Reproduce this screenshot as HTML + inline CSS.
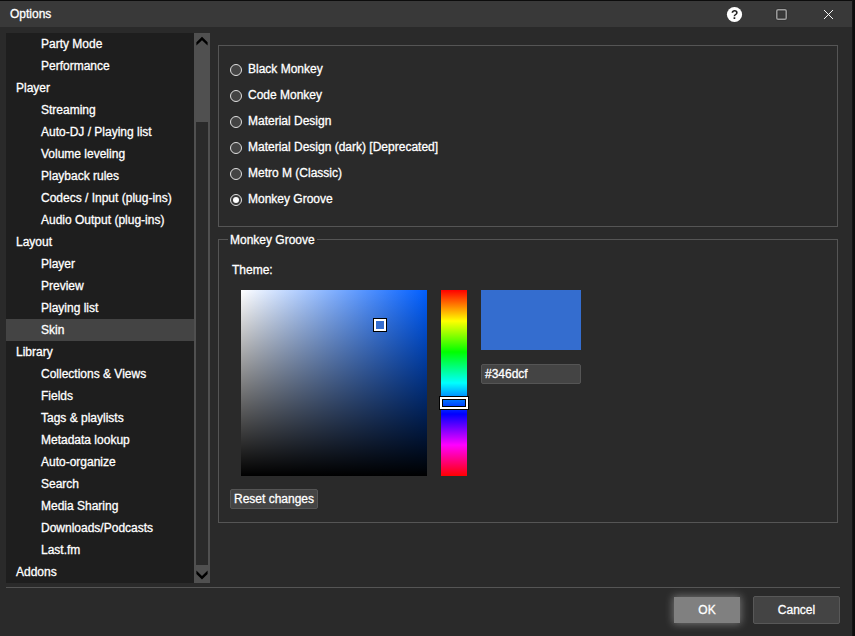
<!DOCTYPE html>
<html>
<head>
<meta charset="utf-8">
<title>Options</title>
<style>
*{box-sizing:border-box;margin:0;padding:0}
html,body{width:855px;height:636px;overflow:hidden;background:#2a2a2a}
body{position:relative;font-family:"Liberation Sans",Arial,sans-serif;font-size:12px;color:#fff;line-height:14px;-webkit-text-stroke:0.3px #fff}
.abs{position:absolute}
#topedge{left:0;top:0;width:855px;height:1px;background:#0c0c0c}
#rightedge{left:852px;top:0;width:3px;height:636px;background:linear-gradient(to right,#1a1a1a 0,#0e0e0e 34%,#0b0b0b 100%)}
#titlebar{left:0;top:1px;width:852px;height:26px;background:#393939}
#title{left:10px;top:7px;white-space:nowrap}
#tree{left:6px;top:33px;width:188px;height:550px;background:#1e1e1e;overflow:hidden}
.row{position:absolute;left:0;width:188px;height:22px;line-height:22px;white-space:nowrap}
.l0{padding-left:10px}
.l1{padding-left:35px}
.sel{background:#444}
#sb{left:194px;top:33px;width:16px;height:550px;background:#505050}
#thumb{left:2px;top:89px;width:12px;height:443px;background:#2a2a2a}
.fs{border:1px solid #555}
#fs1{left:218px;top:45px;width:620px;height:182px}
#fs2{left:218px;top:239px;width:620px;height:284px}
#legend{left:228px;top:233px;height:14px;padding:0 2px;background:#2a2a2a;white-space:nowrap}
.radio{width:12px;height:12px;border-radius:50%;border:1px solid #e0e0e0;background:#444}
.radio.on{background:#383838}
.radio.on::after{content:"";position:absolute;left:2px;top:2px;width:6px;height:6px;border-radius:50%;background:#fff}
.rl{left:248px;white-space:nowrap}
#sq{left:241px;top:290px;width:186px;height:186px;background:linear-gradient(to bottom,rgba(0,0,0,0),#000),linear-gradient(to right,#fff,#005eff)}
#mark{left:373px;top:318px;width:14px;height:14px;border:1px solid #000;background:#fff;padding:2px}
#mark i{display:block;width:8px;height:8px;background:#346dcf}
#hue{left:441px;top:290px;width:26px;height:186px;background:linear-gradient(to bottom,#f00 0%,#ff0 16.67%,#0f0 33.33%,#0ff 50%,#00f 66.67%,#f0f 83.33%,#f00 100%)}
#hs{left:440px;top:397px;width:28px;height:12px;border:2px solid #fff;box-shadow:0 0 0 1px #000,inset 0 0 0 1px #000}
#sw{left:481px;top:290px;width:100px;height:60px;background:#346dcf}
#hex{left:481px;top:364px;width:100px;height:20px;background:#444;border:1px solid #555;border-radius:2px;line-height:18px;padding-left:3px}
#reset{left:230px;top:489px;width:88px;height:20px;background:#444;border:1px solid #555;border-radius:2px;line-height:18px;text-align:center;white-space:nowrap}
#sep{left:6px;top:587px;width:834px;height:1px;background:#555}
#ok{left:674px;top:597px;width:66px;height:26px;background:#808080;line-height:26px;text-align:center;box-shadow:0 0 8px 1px rgba(255,255,255,.35)}
#cancel{left:753px;top:596px;width:87px;height:28px;background:#444;border:1px solid #585858;border-radius:2px;line-height:26px;text-align:center}
</style>
</head>
<body>
<div class="abs" id="titlebar"></div>
<div class="abs" id="topedge"></div>
<div class="abs" id="rightedge"></div>
<div class="abs" id="title">Options</div>

<svg class="abs" style="left:726px;top:6px;will-change:transform;-webkit-text-stroke:0" width="17" height="17" viewBox="0 0 17 17">
  <circle cx="8.5" cy="8.5" r="7.6" fill="#fff"/>
  <text x="8.6" y="13" text-anchor="middle" font-family="Liberation Sans, Arial, sans-serif" font-weight="bold" font-size="12" fill="#222">?</text>
</svg>
<svg class="abs" style="left:775px;top:8px" width="13" height="13" viewBox="0 0 13 13">
  <rect x="1.8" y="1.8" width="9.4" height="9.4" rx="1.3" fill="none" stroke="rgba(0,0,0,.14)" stroke-width="3"/><rect x="1.8" y="1.8" width="9.4" height="9.4" rx="1.3" fill="none" stroke="#9c9c9c" stroke-width="1.5"/>
</svg>
<svg class="abs" style="left:823px;top:9px" width="11" height="11" viewBox="0 0 11 11">
  <path d="M1 1 L10 10 M10 1 L1 10" stroke="#fff" stroke-width="0.95" fill="none"/>
</svg>

<div class="abs" id="tree">
  <div class="row l1" style="top:0">Party Mode</div>
  <div class="row l1" style="top:22px">Performance</div>
  <div class="row l0" style="top:44px">Player</div>
  <div class="row l1" style="top:66px">Streaming</div>
  <div class="row l1" style="top:88px">Auto-DJ / Playing list</div>
  <div class="row l1" style="top:110px">Volume leveling</div>
  <div class="row l1" style="top:132px">Playback rules</div>
  <div class="row l1" style="top:154px">Codecs / Input (plug-ins)</div>
  <div class="row l1" style="top:176px">Audio Output (plug-ins)</div>
  <div class="row l0" style="top:198px">Layout</div>
  <div class="row l1" style="top:220px">Player</div>
  <div class="row l1" style="top:242px">Preview</div>
  <div class="row l1" style="top:264px">Playing list</div>
  <div class="row l1 sel" style="top:286px">Skin</div>
  <div class="row l0" style="top:308px">Library</div>
  <div class="row l1" style="top:330px">Collections &amp; Views</div>
  <div class="row l1" style="top:352px">Fields</div>
  <div class="row l1" style="top:374px">Tags &amp; playlists</div>
  <div class="row l1" style="top:396px">Metadata lookup</div>
  <div class="row l1" style="top:418px">Auto-organize</div>
  <div class="row l1" style="top:440px">Search</div>
  <div class="row l1" style="top:462px">Media Sharing</div>
  <div class="row l1" style="top:484px">Downloads/Podcasts</div>
  <div class="row l1" style="top:506px">Last.fm</div>
  <div class="row l0" style="top:528px">Addons</div>
</div>

<div class="abs" id="sb">
  <div class="abs" id="thumb"></div>
  <svg class="abs" style="left:0;top:0" width="16" height="18" viewBox="0 0 16 18">
    <polygon points="8,3.8 13.6,9.2 13.6,12.6 8,7.2 2.4,12.6 2.4,9.2" fill="#000"/>
  </svg>
  <svg class="abs" style="left:0;top:532px" width="16" height="18" viewBox="0 0 16 18">
    <polygon points="8,14.4 13.6,9 13.6,5.6 8,11 2.4,5.6 2.4,9" fill="#000"/>
  </svg>
</div>

<div class="abs fs" id="fs1"></div>
<div class="abs radio" style="left:230px;top:64px"></div><div class="abs rl" style="top:62px">Black Monkey</div>
<div class="abs radio" style="left:230px;top:90px"></div><div class="abs rl" style="top:88px">Code Monkey</div>
<div class="abs radio" style="left:230px;top:116px"></div><div class="abs rl" style="top:114px">Material Design</div>
<div class="abs radio" style="left:230px;top:142px"></div><div class="abs rl" style="top:140px">Material Design (dark) [Deprecated]</div>
<div class="abs radio" style="left:230px;top:168px"></div><div class="abs rl" style="top:166px">Metro M (Classic)</div>
<div class="abs radio on" style="left:230px;top:194px"></div><div class="abs rl" style="top:192px">Monkey Groove</div>

<div class="abs fs" id="fs2"></div>
<div class="abs" id="legend">Monkey Groove</div>
<div class="abs" style="left:232px;top:263px">Theme:</div>
<div class="abs" id="sq"></div>
<div class="abs" id="mark"><i></i></div>
<div class="abs" id="hue"></div>
<div class="abs" id="hs"></div>
<div class="abs" id="sw"></div>
<div class="abs" id="hex">#346dcf</div>
<div class="abs" id="reset">Reset changes</div>

<div class="abs" id="sep"></div>
<div class="abs" id="ok">OK</div>
<div class="abs" id="cancel">Cancel</div>
</body>
</html>
